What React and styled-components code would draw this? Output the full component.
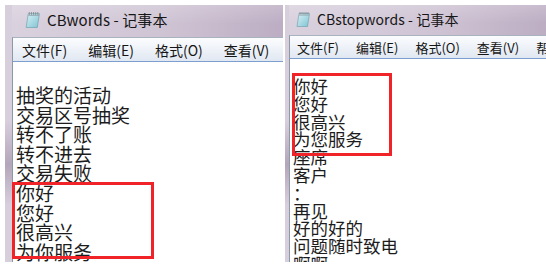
import React from "react";
import styled, { createGlobalStyle } from "styled-components";

const GlobalStyle = createGlobalStyle`
  html, body {
    margin: 0;
    padding: 0;
    background: #ffffff;
  }
  body {
    font-family: "Noto Sans CJK SC", "Noto Sans", sans-serif;
  }
`;

const Page = styled.div`
  position: relative;
  display: flex;
  gap: 2px;
  width: 546px;
  height: 267px;
  padding: 5px 0 0 5px;
  box-sizing: border-box;
  overflow: hidden;
`;

const Window = styled.div`
  display: flex;
  flex-direction: column;
  flex: none;
  width: ${(p) => p.$width}px;
  height: 257px;
  padding-left: ${(p) => p.$edge}px;
  box-sizing: border-box;
  overflow: hidden;
  background:
    linear-gradient(180deg, rgba(255, 255, 255, 0) 0%, rgba(255, 255, 255, 0) 45%, rgba(110, 90, 120, 0.35) 62%, rgba(255, 255, 255, 0) 78%),
    linear-gradient(90deg, #d8cfdd 0%, #cdc2d3 50%, #bfb0c5 100%);
`;

const TitleBar = styled.div`
  display: flex;
  align-items: center;
  gap: ${(p) => p.$gap}px;
  flex: none;
  height: ${(p) => p.$height}px;
  padding: 0 0 3px ${(p) => p.$pad}px;
  box-sizing: border-box;
  background:
    linear-gradient(180deg, rgba(255, 255, 255, 0.18) 0%, rgba(255, 255, 255, 0) 60%),
    linear-gradient(90deg, #d9d1de 0%, #cfc4d4 55%, #bcadc3 100%);
`;

const Title = styled.span`
  font-size: ${(p) => p.$size}px;
  color: #161616;
  white-space: nowrap;
  letter-spacing: 0.1px;
`;

const Client = styled.div`
  display: flex;
  flex-direction: column;
  flex: 1;
  min-height: 0;
  background: #ffffff;
  border-left: 1px solid #8e99a8;
  border-top: 1px solid #a9b2bf;
`;

const MenuBar = styled.div`
  display: flex;
  align-items: center;
  gap: ${(p) => p.$gap}px;
  flex: none;
  height: ${(p) => p.$height}px;
  padding-left: ${(p) => p.$pad}px;
  box-sizing: border-box;
  background: linear-gradient(180deg, #fbfcfe 0%, #eef2f8 50%, #e1e8f2 100%);
  border-bottom: 1px solid #7c9fcf;
`;

const MenuItem = styled.span`
  font-size: ${(p) => p.$size}px;
  color: #151515;
  white-space: nowrap;
`;

const Content = styled.div`
  flex: 1;
  padding: ${(p) => p.$top}px 0 0 3px;
  font-size: ${(p) => p.$size}px;
  line-height: ${(p) => p.$line}px;
  color: #1c1c1c;
  white-space: pre;
  overflow: hidden;
`;

const Line = styled.div`
  height: ${(p) => p.$line}px;
`;

const Highlight = styled.div`
  position: absolute;
  left: ${(p) => p.$x}px;
  top: ${(p) => p.$y}px;
  width: ${(p) => p.$w}px;
  height: ${(p) => p.$h}px;
  border: ${(p) => p.$b}px solid #ef2328;
  box-sizing: border-box;
  pointer-events: none;
`;

const NotepadIcon = ({ size }) => (
  <svg width={size} height={size} viewBox="0 0 16 16">
    <defs>
      <linearGradient id="pg" x1="0" y1="0" x2="1" y2="1">
        <stop offset="0" stopColor="#d9f1f5" />
        <stop offset="1" stopColor="#7ec4d3" />
      </linearGradient>
    </defs>
    <path d="M4 2.5 L14.5 2.5 L12.5 15.5 L2 15.5 Z" fill="url(#pg)" stroke="#6a9cab" strokeWidth="0.6" />
    <path d="M4 4.2 L14.2 4.2" stroke="#9aa6ad" strokeWidth="0.8" />
    {[5, 7, 9, 11, 13].map((x) => (
      <path key={x} d={`M${x} 1 L${x} 3.6`} stroke="#7d868c" strokeWidth="0.8" />
    ))}
  </svg>
);

const menus = ["文件(F)", "编辑(E)", "格式(O)", "查看(V)", "帮助(H)"];

const leftLines = [
  "抽奖的活动",
  "交易区号抽奖",
  "转不了账",
  "转不进去",
  "交易失败",
  "你好",
  "您好",
  "很高兴",
  "为你服务",
  "好的好的",
];

const rightLines = [
  "你好",
  "您好",
  "很高兴",
  "为您服务",
  "座席",
  "客户",
  "：",
  "再见",
  "好的好的",
  "问题随时致电",
  "啊啊",
];

const Notepad = ({ title, lines, s }) => (
  <Window $width={s.width} $edge={s.edge}>
    <TitleBar $height={s.titleH} $pad={s.iconPad} $gap={s.titleGap}>
      <NotepadIcon size={s.icon} />
      <Title $size={s.titleSize}>{title}</Title>
    </TitleBar>
    <Client>
      <MenuBar $height={s.menuH} $pad={s.menuPad} $gap={s.menuGap}>
        {menus.map((m) => (
          <MenuItem key={m} $size={s.menuSize}>
            {m}
          </MenuItem>
        ))}
      </MenuBar>
      <Content $top={s.textTop} $size={s.textSize} $line={s.line}>
        {lines.map((l, i) => (
          <Line key={i} $line={s.line}>
            {l}
          </Line>
        ))}
      </Content>
    </Client>
  </Window>
);

const leftScale = {
  width: 278,
  edge: 7,
  titleH: 32,
  iconPad: 12,
  titleGap: 6,
  icon: 17,
  titleSize: 15,
  menuH: 24,
  menuPad: 9,
  menuGap: 21,
  menuSize: 14,
  textTop: 23,
  textSize: 19,
  line: 19.6,
};

const rightScale = {
  width: 262,
  edge: 4,
  titleH: 30,
  iconPad: 6,
  titleGap: 6,
  icon: 16,
  titleSize: 14,
  menuH: 23,
  menuPad: 7,
  menuGap: 17,
  menuSize: 13,
  textTop: 18,
  textSize: 17.5,
  line: 17.8,
};

export default function App() {
  return (
    <>
      <GlobalStyle />
      <Page>
        <Notepad title="CBwords - 记事本" lines={leftLines} s={leftScale} />
        <Notepad title="CBstopwords - 记事本" lines={rightLines} s={rightScale} />
        <Highlight $x={12} $y={182} $w={142} $h={77} $b={3} />
        <Highlight $x={292} $y={73} $w={100} $h={83} $b={3} />
      </Page>
    </>
  );
}
